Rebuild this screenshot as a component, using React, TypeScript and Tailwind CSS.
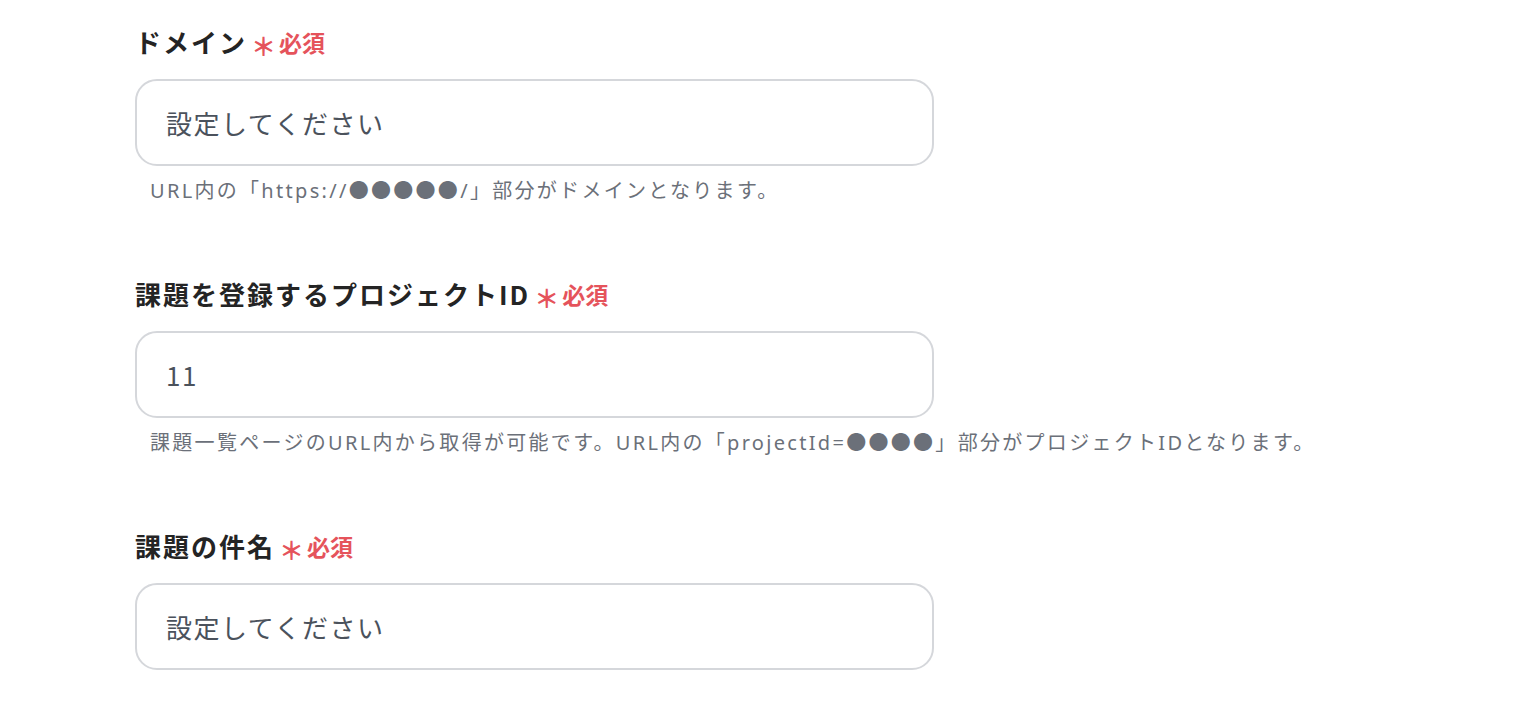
import React from "react";

const font = { fontFamily: '"Noto Sans CJK JP", "Noto Sans", sans-serif' };
const helpFont = { fontFamily: '"Noto Sans", "Noto Sans CJK JP", sans-serif' };
const cjk = { fontFamily: '"Noto Sans CJK JP", sans-serif' };

function renderHelp(text: string) {
  const parts = text.split(/(●+)/);
  return parts.map((p, i) =>
    p.startsWith("●") ? (
      <span key={i} style={cjk}>
        {p}
      </span>
    ) : (
      <span key={i}>{p}</span>
    )
  );
}

function Field({ label, value, help }: { label: string; value: string; help?: string }) {
  return (
    <div className="flex flex-col">
      <div className="flex items-center h-[30px]">
        <span className="text-[26px] font-bold text-[#242424] tracking-[2px] leading-[30px]">{label}</span>
        <span className="ml-[4px] text-[25px] font-bold text-[#e5535b] leading-[30px] mt-[6px]">＊</span>
        <span className="ml-[3px] text-[23px] font-bold text-[#e5535b] leading-[30px]">必須</span>
      </div>
      <div className="mt-[22px] w-[799px] h-[87px] border-2 border-[#d5d7db] rounded-[22px] flex items-center pl-[29px]">
        <span className="text-[26px] text-[#4b525c] tracking-[1.5px]">{value}</span>
      </div>
      {help && (
        <div
          className="mt-[12px] h-[24px] flex items-center pl-[15px] text-[20px] leading-[24px] text-[#6b7079] tracking-[2.3px] whitespace-nowrap"
          style={helpFont}
        >
          <span>{renderHelp(help)}</span>
        </div>
      )}
    </div>
  );
}

export default function App() {
  return (
    <div className="w-[1538px] h-[704px] bg-white overflow-hidden pl-[135px] pt-[27px]" style={font}>
      <div className="flex flex-col gap-[77px]">
        <Field label="ドメイン" value="設定してください" help="URL内の「https://●●●●●/」部分がドメインとなります。" />
        <Field
          label="課題を登録するプロジェクトID"
          value="11"
          help="課題一覧ページのURL内から取得が可能です。URL内の「projectId=●●●●」部分がプロジェクトIDとなります。"
        />
        <Field label="課題の件名" value="設定してください" />
      </div>
    </div>
  );
}
